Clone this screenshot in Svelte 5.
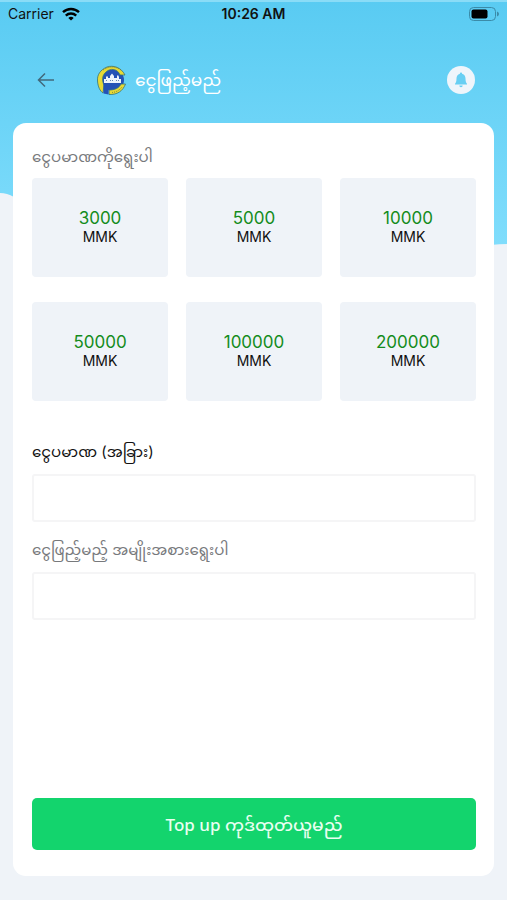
<script lang="ts">
	const amounts = [3000, 5000, 10000, 50000, 100000, 200000];

	let amount = $state('');
	let method = $state('');
</script>

<svelte:head>
	<title>ငွေဖြည့်မည်</title>
</svelte:head>

<div class="screen">
	<svg class="backdrop" viewBox="0 0 507 246" preserveAspectRatio="none" aria-hidden="true">
		<defs>
			<linearGradient id="sky" x1="0" y1="0" x2="0" y2="1">
				<stop offset="0" stop-color="#59cbf2" />
				<stop offset="1" stop-color="#80ddfc" />
			</linearGradient>
		</defs>
		<path fill="url(#sky)" d="M0 0H507V244Q500 244 490 245C330 246 110 215 14 197Q7 193 0 193Z" />
		<path fill="#8adcf7" d="M0 0H507V2H0Z" />
	</svg>

	<div class="status">
		<div class="carrier">
			<span>Carrier</span>
			<svg width="18" height="14" viewBox="0 0 18 14" aria-hidden="true">
				<path d="M1 5.2a11.6 11.6 0 0 1 16 0" />
				<path d="M3.8 8.6a7.6 7.6 0 0 1 10.4 0" />
				<path class="dot" d="M9 13.6 6.3 10.9a4 4 0 0 1 5.4 0Z" />
			</svg>
		</div>
		<time>10:26 AM</time>
		<svg class="battery" width="30" height="14" viewBox="0 0 30 14" aria-hidden="true">
			<rect x="0.5" y="0.5" width="26" height="13" rx="4" fill="none" stroke="#3b8ba8" />
			<rect x="2.5" y="2.5" width="16" height="9" rx="2" fill="#000" />
			<path d="M28 4.5Q30 5.3 30 7T28 9.5Z" fill="#3b8ba8" />
		</svg>
	</div>

	<header class="topbar">
		<button class="back" aria-label="Back">
			<svg width="18" height="16" viewBox="0 0 18 16" aria-hidden="true">
				<path d="M17 8H1.5M8 1.5 1.5 8 8 14.5" />
			</svg>
		</button>
		<svg class="logo" width="30" height="30" viewBox="0 0 30 30" aria-hidden="true">
			<circle cx="16" cy="15" r="11" fill="#2452b5" />
			<path
				d="M28 10C24 2 16 0 10 2 3 5 0 10 0.5 16 1 22 3 26 6 28L7 20C5 16 5 11 8 8 13 2 21 4 23 10Z"
				fill="#e6d936"
				stroke="#34737a"
				stroke-width="0.8"
			/>
			<path
				d="M12 25C18 25 22 23 24 19H28.500C26 26 20 30 12 29.500Z"
				fill="#e6d936"
				stroke="#34737a"
				stroke-width="0.8"
			/>
			<path
				d="M6 5Q15-1 24 5M15 27.5Q21 27 25 22"
				fill="none"
				stroke="#767b36"
				stroke-dasharray="1 1"
			/>
			<path d="M6.500 17V28.500L11.500 29.500V22Z" fill="#2452b5" />
			<path
				d="M7 18V14H9V12L10 11 11 12V13H13V11L15 8.5 17 11V13H20V11L21 10 22 12V14H24V18Z"
				fill="#edf4fc"
			/>
			<path d="M9 15.5H11M13 15.5H17M19 15.5H22" stroke="#6485b5" stroke-dasharray="1 1" />
		</svg>
		<h1>ငွေဖြည့်မည်</h1>
		<button class="bell" aria-label="Notifications">
			<svg width="14" height="16" viewBox="0 0 14 16" aria-hidden="true">
				<path
					d="M7 0.5A1.1 1.1 0 0 1 8.1 1.7C10.4 2.3 11.5 4.2 11.5 6.5 11.5 9.6 12.2 10.8 13 11.7V12.5H1V11.7C1.8 10.8 2.5 9.6 2.5 6.5 2.5 4.2 3.6 2.3 5.9 1.7A1.1 1.1 0 0 1 7 0.5ZM5.3 13.5H8.7A1.7 1.7 0 0 1 5.3 13.5Z"
				/>
			</svg>
		</button>
	</header>

	<main class="card">
		<h2>ငွေပမာဏကိုရွေးပါ</h2>
		<div class="amounts">
			{#each amounts as value}
				<button class="tile" onclick={() => (amount = String(value))}>
					<span class="value">{value}</span>
					<span class="unit">MMK</span>
				</button>
			{/each}
		</div>

		<label class="dark" for="amount">ငွေပမာဏ (အခြား)</label>
		<input id="amount" class="field" type="text" inputmode="numeric" bind:value={amount} />

		<label for="method">ငွေဖြည့်မည့် အမျိုးအစားရွေးပါ</label>
		<select id="method" class="field" bind:value={method}>
			<option value=""></option>
		</select>

		<button class="submit">Top up ကုဒ်ထုတ်ယူမည်</button>
	</main>
</div>

<style>
	:global(body) {
		margin: 0;
		background: #eff3f8;
	}

	.screen {
		position: relative;
		display: flex;
		flex-direction: column;
		box-sizing: border-box;
		min-height: 100vh;
		padding-bottom: 24px;
		font-family: Inter, 'Noto Sans Myanmar', 'Noto Sans', sans-serif;
		color: #111;
	}

	button,
	.field {
		box-sizing: border-box;
		margin: 0;
		padding: 0;
		border: 0;
		font: inherit;
		color: inherit;
	}

	button {
		background: none;
		cursor: pointer;
	}

	/* sits behind the whole page */
	.backdrop {
		position: absolute;
		top: 0;
		left: 0;
		z-index: -1;
		width: 100%;
		height: 246px;
	}

	.status {
		display: grid;
		grid-template-columns: 1fr auto 1fr;
		align-items: center;
		height: 27px;
		padding: 0 8px;
		font-size: 14px;
	}

	.carrier {
		display: flex;
		align-items: center;
		gap: 8px;
	}

	.carrier path {
		fill: none;
		stroke: #000;
		stroke-width: 2.4;
	}

	.carrier .dot {
		fill: #000;
		stroke: none;
	}

	.status time {
		font-weight: 600;
	}

	.battery {
		justify-self: end;
	}

	.topbar {
		display: flex;
		align-items: center;
		height: 64px;
		padding: 21px 32px 11px;
	}

	.back {
		display: flex;
		align-items: center;
		justify-content: center;
		width: 28px;
		height: 28px;
		margin-right: 37px;
	}

	.back path {
		fill: none;
		stroke: #41697c;
		stroke-width: 1.5;
	}

	.logo {
		flex: none;
	}

	h1 {
		flex: 1;
		margin: 0 0 0 8px;
		font-size: 17px;
		font-weight: 400;
		line-height: 36px;
		color: #fff;
	}

	.bell {
		display: flex;
		align-items: center;
		justify-content: center;
		width: 28px;
		height: 28px;
		border-radius: 50%;
		background: #eff5fb;
	}

	.bell path {
		fill: #68cff3;
	}

	.card {
		display: flex;
		flex: 1;
		flex-direction: column;
		margin: 0 13px;
		padding: 20px 18px 26px 19px;
		border-radius: 13px;
		background: #fff;
	}

	h2,
	label {
		margin: 0;
		font-size: 15px;
		font-weight: 400;
		line-height: 28px;
		color: #77797c;
	}

	.amounts {
		display: grid;
		grid-template-columns: repeat(3, 1fr);
		gap: 25px 18px;
		margin: 7px 0 37px;
	}

	.tile {
		display: flex;
		flex-direction: column;
		align-items: center;
		justify-content: center;
		height: 99px;
		padding-bottom: 2px;
		border-radius: 4px;
		background: #eff3f8;
	}

	.value {
		font-size: 17px;
		line-height: 20px;
		color: #148c1c;
	}

	.unit {
		font-size: 14px;
		line-height: 18px;
	}

	.dark {
		color: #111;
	}

	.field {
		width: 100%;
		height: 48px;
		margin: 8px 0 14px;
		padding: 0 12px;
		border: 2px solid #f5f5f6;
		border-radius: 3px;
		background: #fff;
		font-size: 15px;
		appearance: none;
	}

	.submit {
		height: 52px;
		margin-top: auto;
		padding-top: 6px;
		border-radius: 5px;
		background: #13d46d;
		font-family: 'Noto Sans', 'Noto Sans Myanmar', sans-serif;
		font-size: 17px;
		font-weight: 500;
		color: #e9fff1;
	}
</style>
